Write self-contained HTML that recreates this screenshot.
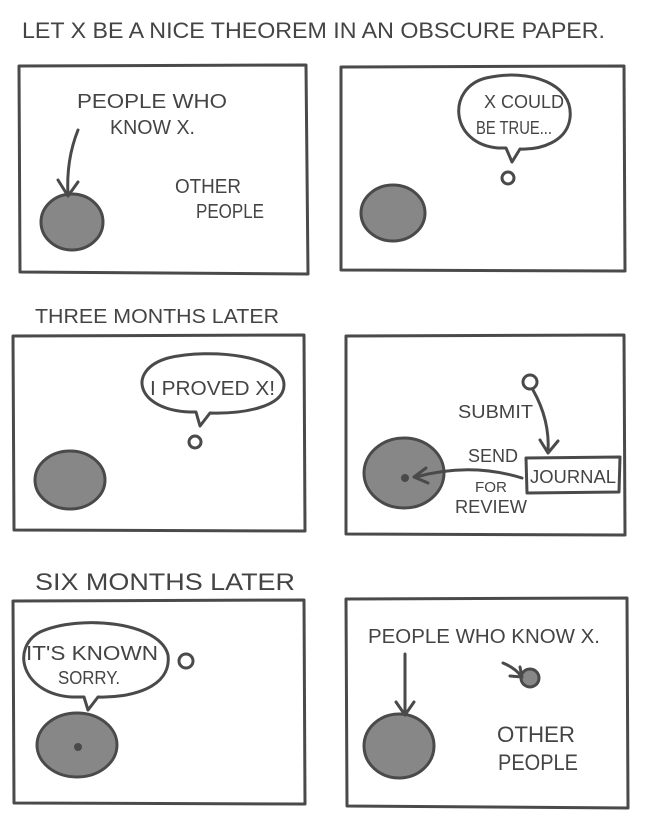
<!DOCTYPE html>
<html><head><style>
html,body{margin:0;padding:0;background:#fff;}
svg{display:block}
text{font-family:"Liberation Sans",sans-serif;fill:#444;}
</style></head><body>
<svg width="649" height="824" viewBox="0 0 649 824" xmlns="http://www.w3.org/2000/svg">
<g fill="#878787" stroke="#4a4a4a" stroke-width="3">
<ellipse cx="72" cy="222" rx="31" ry="28"/>
<ellipse cx="393" cy="213" rx="32" ry="28"/>
<ellipse cx="70" cy="480" rx="35" ry="29"/>
<ellipse cx="404" cy="473" rx="40" ry="35"/>
<ellipse cx="77" cy="745" rx="40" ry="32"/>
<ellipse cx="399" cy="746" rx="35" ry="32"/>
<circle cx="530" cy="678" r="9"/>
</g>
<g fill="#4a4a4a"><circle cx="405" cy="478" r="4"/><circle cx="78" cy="747" r="4"/></g>
<g fill="none" stroke="#4a4a4a" stroke-width="3" stroke-linecap="round" stroke-linejoin="round">
<path d="M19 66 L306 65 L308 274 L20 272 Z"/>
<path d="M341 67 L624 66 L625 271 L341 270 Z"/>
<path d="M13 336 L304 335 L305 531 L14 530 Z"/>
<path d="M346 336 L624 335 L625 535 L346 534 Z"/>
<path d="M13 601 L304 600 L305 804 L14 803 Z"/>
<path d="M346 599 L627 598 L628 808 L347 806 Z"/>
<path d="M78 130 Q66 160 68 195"/><path d="M58 180 L68 196 L78 182"/>
<path d="M498 148 C450 144 446 88 486 78 C530 68 574 84 570 118 C567 142 540 150 520 149 L512 162 L506 148 Z" fill="#fff"/>
<circle cx="508" cy="178" r="6"/>
<path d="M190 412 C136 410 126 370 168 358 C210 348 284 355 284 385 C284 408 240 414 210 413 L200 426 L196 412 Z" fill="#fff"/>
<circle cx="195" cy="442" r="6"/>
<circle cx="530" cy="382" r="7"/>
<path d="M533 390 Q550 420 548 452"/><path d="M540 440 L548 453 L558 441"/>
<path d="M526 458 L620 457 L619 492 L527 493 Z"/>
<path d="M522 478 Q470 462 416 477"/><path d="M426 468 L414 477 L428 483"/>
<path d="M72 697 C22 694 10 648 40 632 C80 614 160 622 168 655 C172 688 130 698 98 697 L88 710 L84 697 Z" fill="#fff"/>
<circle cx="186" cy="661" r="7"/>
<path d="M405 654 L405 714"/><path d="M396 702 L405 715 L414 702"/>
<path d="M503 663 Q515 668 521 676"/><path d="M510 676 L522 677 L520 667"/>
</g>
<g font-size="20">
<text x="22" y="38" font-size="22" textLength="583" lengthAdjust="spacingAndGlyphs">LET X BE A NICE THEOREM IN AN OBSCURE PAPER.</text>
<text x="77" y="108" textLength="150" lengthAdjust="spacingAndGlyphs">PEOPLE WHO</text>
<text x="110" y="134" textLength="85" lengthAdjust="spacingAndGlyphs">KNOW X.</text>
<text x="175" y="193" textLength="66" lengthAdjust="spacingAndGlyphs">OTHER</text>
<text x="196" y="218" textLength="68" lengthAdjust="spacingAndGlyphs">PEOPLE</text>
<text x="484" y="108" font-size="18" textLength="80" lengthAdjust="spacingAndGlyphs">X COULD</text>
<text x="476" y="134" font-size="18" textLength="76" lengthAdjust="spacingAndGlyphs">BE TRUE...</text>
<text x="35" y="323" textLength="244" lengthAdjust="spacingAndGlyphs">THREE MONTHS LATER</text>
<text x="150" y="395" textLength="125" lengthAdjust="spacingAndGlyphs">I PROVED X!</text>
<text x="458" y="418" font-size="18" textLength="75" lengthAdjust="spacingAndGlyphs">SUBMIT</text>
<text x="468" y="462" font-size="18" textLength="50" lengthAdjust="spacingAndGlyphs">SEND</text>
<text x="530" y="483" font-size="18" textLength="86" lengthAdjust="spacingAndGlyphs">JOURNAL</text>
<text x="475" y="492" font-size="15" textLength="32" lengthAdjust="spacingAndGlyphs">FOR</text>
<text x="455" y="513" font-size="18" textLength="72" lengthAdjust="spacingAndGlyphs">REVIEW</text>
<text x="35" y="590" font-size="24" textLength="260" lengthAdjust="spacingAndGlyphs">SIX MONTHS LATER</text>
<text x="26" y="660" textLength="132" lengthAdjust="spacingAndGlyphs">IT'S KNOWN</text>
<text x="58" y="684" font-size="18" textLength="62" lengthAdjust="spacingAndGlyphs">SORRY.</text>
<text x="368" y="643" textLength="232" lengthAdjust="spacingAndGlyphs">PEOPLE WHO KNOW X.</text>
<text x="497" y="742" font-size="22" textLength="78" lengthAdjust="spacingAndGlyphs">OTHER</text>
<text x="498" y="770" font-size="22" textLength="80" lengthAdjust="spacingAndGlyphs">PEOPLE</text>
</g>
</svg>
</body></html>
